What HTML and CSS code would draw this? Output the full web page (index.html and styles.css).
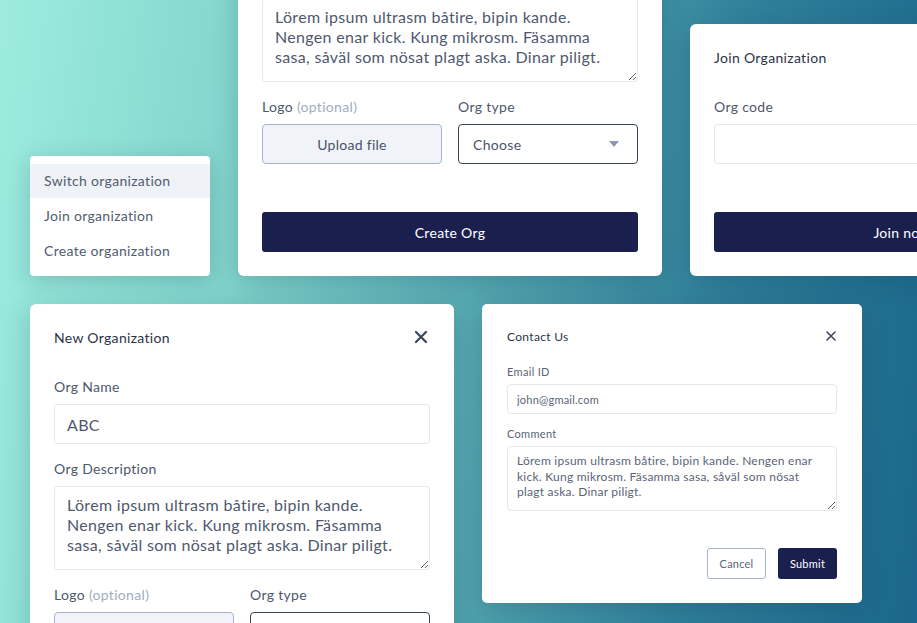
FILE: index.html
```html
<!DOCTYPE html>
<html>
  <head>
    <title>Organization dialogs</title>
    <meta name="viewport" content="width=device-width, initial-scale=1">
    <link rel="stylesheet" href="styles.css">
  </head>
  <body>
    <div class="canvas">

      <div class="row row-top">
        <ul class="menu">
          <li class="menu-item active">Switch organization</li>
          <li class="menu-item">Join organization</li>
          <li class="menu-item">Create organization</li>
        </ul>

        <div class="card">
          <div class="card-head">
            <span class="card-title">New Organization</span>
            <svg class="close" width="14" height="14" viewBox="0 0 14 14"><path d="M2 2 L12 12 M12 2 L2 12" /></svg>
          </div>
          <label class="label first">Org Name</label>
          <input class="input" type="text" value="ABC">
          <label class="label">Org Description</label>
          <textarea class="textarea">Lörem ipsum ultrasm båtire, bipin kande.
Nengen enar kick. Kung mikrosm. Fäsamma
sasa, såväl som nösat plagt aska. Dinar piligt.</textarea>
          <div class="pair">
            <div>
              <label class="label">Logo <span class="muted">(optional)</span></label>
              <button class="upload">Upload file</button>
            </div>
            <div>
              <label class="label">Org type</label>
              <div class="select">Choose<span class="caret"></span></div>
            </div>
          </div>
          <button class="primary">Create Org</button>
        </div>

        <div class="card">
          <div class="card-head">
            <span class="card-title">Join Organization</span>
            <svg class="close" width="14" height="14" viewBox="0 0 14 14"><path d="M2 2 L12 12 M12 2 L2 12" /></svg>
          </div>
          <label class="label first">Org code</label>
          <input class="input" type="text" value="">
          <button class="primary">Join now</button>
        </div>
      </div>

      <div class="row row-bottom">
        <div class="card">
          <div class="card-head">
            <span class="card-title">New Organization</span>
            <svg class="close" width="14" height="14" viewBox="0 0 14 14"><path d="M2 2 L12 12 M12 2 L2 12" /></svg>
          </div>
          <label class="label first">Org Name</label>
          <input class="input" type="text" value="ABC">
          <label class="label">Org Description</label>
          <textarea class="textarea">Lörem ipsum ultrasm båtire, bipin kande.
Nengen enar kick. Kung mikrosm. Fäsamma
sasa, såväl som nösat plagt aska. Dinar piligt.</textarea>
          <div class="pair">
            <div>
              <label class="label">Logo <span class="muted">(optional)</span></label>
              <button class="upload">Upload file</button>
            </div>
            <div>
              <label class="label">Org type</label>
              <div class="select">Choose<span class="caret"></span></div>
            </div>
          </div>
          <button class="primary">Create Org</button>
        </div>

        <div class="card small">
          <div class="card-head">
            <span class="card-title">Contact Us</span>
            <svg class="close" width="12" height="12" viewBox="0 0 12 12"><path d="M2 2 L10 10 M10 2 L2 10" /></svg>
          </div>
          <label class="label first">Email ID</label>
          <input class="input" type="text" value="john@gmail.com">
          <label class="label">Comment</label>
          <textarea class="textarea">Lörem ipsum ultrasm båtire, bipin kande. Nengen enar
kick. Kung mikrosm. Fäsamma sasa, såväl som nösat
plagt aska. Dinar piligt.</textarea>
          <div class="actions">
            <button class="ghost">Cancel</button>
            <button class="primary">Submit</button>
          </div>
        </div>
      </div>

    </div>
  </body>
</html>
```

FILE: styles.css
```css
body {
    margin: 0;
    height: 623px;
    overflow: hidden;
    font-family: Lato, "Noto Sans", sans-serif;
    letter-spacing: 0.02em;
    background: linear-gradient(98deg, #9decde 0%, #7fd3cb 28%, #55a8b1 52%, #2f7f9a 76%, #1a678b 100%);
}

input, textarea, button { font-family: inherit; letter-spacing: 0.02em; }

.canvas { padding-left: 30px; }

.row { display: flex; gap: 28px; }
.row-top { height: 276px; align-items: flex-end; }
.row-bottom { margin-top: 28px; align-items: flex-start; }

/* dropdown menu */
.menu {
    list-style: none;
    margin: 0;
    padding: 8px 0;
    width: 180px;
    flex-shrink: 0;
    background: #fff;
    border-radius: 4px;
    box-shadow: 0 4px 22px rgba(20, 60, 80, 0.22);
    display: flex;
    flex-direction: column;
    gap: 1px;
}
.menu-item {
    height: 34px;
    line-height: 34px;
    padding-left: 14px;
    font-size: 14px;
    color: #525c70;
}
.menu-item.active { background: #eff2f7; }

/* cards */
.card {
    width: 424px;
    flex-shrink: 0;
    box-sizing: border-box;
    padding: 24px;
    background: #fff;
    border-radius: 6px;
    box-shadow: 0 6px 26px rgba(20, 60, 80, 0.22);
    display: flex;
    flex-direction: column;
}

.card-head {
    display: flex;
    justify-content: space-between;
    align-items: center;
    height: 18px;
}
.card-title { font-size: 14px; color: #2b3447; }
.close { margin-right: 2px; }
.close path { stroke: #3b475b; stroke-width: 2.2; stroke-linecap: round; fill: none; }

.label {
    display: block;
    font-size: 14px;
    line-height: 20px;
    color: #4d576b;
    margin: 15px 0 7px;
}
.label.first { margin-top: 31px; }
.muted { color: #a3adbe; }

.input {
    height: 40px;
    box-sizing: border-box;
    border: 1px solid #e3e8ef;
    border-radius: 4px;
    padding: 0 12px;
    font-size: 16px;
    color: #4f596d;
    outline: none;
}

.textarea {
    height: 84px;
    box-sizing: border-box;
    border: 1px solid #e3e8ef;
    border-radius: 4px;
    padding: 8px 12px;
    font-size: 16px;
    line-height: 20px;
    color: #4f596d;
    resize: vertical;
    overflow: hidden;
    outline: none;
}

.pair { display: grid; grid-template-columns: 1fr 1fr; gap: 16px; }

.upload {
    width: 100%;
    height: 40px;
    background: #f0f3f8;
    border: 1px solid #a7b4c6;
    border-radius: 4px;
    font-size: 14px;
    color: #4a5468;
}

.select {
    height: 40px;
    box-sizing: border-box;
    border: 1px solid #3a4458;
    border-radius: 4px;
    padding: 0 18px 0 14px;
    display: flex;
    align-items: center;
    justify-content: space-between;
    font-size: 14px;
    color: #4a5468;
}
.caret {
    width: 0;
    height: 0;
    border-left: 5px solid transparent;
    border-right: 5px solid transparent;
    border-top: 6px solid #8b9ab2;
}

.primary {
    margin-top: 48px;
    height: 40px;
    border: none;
    border-radius: 3px;
    background: #1b1f4e;
    color: #fff;
    font-size: 14px;
}

/* small contact card */
.card.small { width: 380px; padding: 24px 25px; border-radius: 5px; }
.small .card-head { height: 16px; }
.small .card-title { font-size: 12px; }
.small .close { margin-right: 0; }
.small .close path { stroke-width: 1.6; }
.small .label { font-size: 11px; line-height: 16px; margin: 12px 0 4px; color: #5a6478; }
.small .label.first { margin-top: 20px; }
.small .input { height: 30px; padding: 0 9px; font-size: 11px; color: #5a6478; }
.small .textarea { height: 65px; padding: 6px 9px; font-size: 12px; line-height: 15.5px; color: #5a6478; }

.actions { display: flex; justify-content: flex-end; gap: 12px; margin-top: 37px; }
.actions button { margin: 0; width: 59px; height: 31px; font-size: 11px; border-radius: 3px; }
.ghost {
    background: #fff;
    border: 1px solid #a9b5c7;
    color: #5a6478;
}
```
